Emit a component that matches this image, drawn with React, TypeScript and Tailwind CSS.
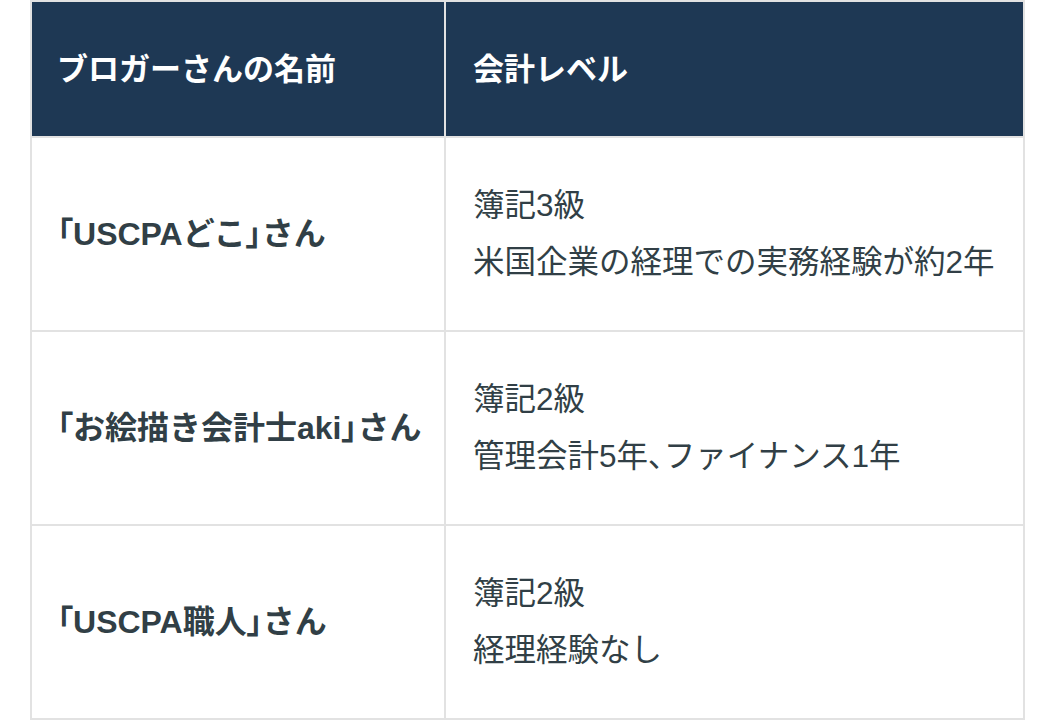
import React from "react";

const B = ({ c }: { c: string }) => <span className="[font-feature-settings:'palt']">{c}</span>;

const rows = [
  { name: ["USCPAどこ"], lines: [["簿記3級"], ["米国企業の経理での実務経験が約2年"]] },
  { name: ["お絵描き会計士aki"], lines: [["簿記2級"], ["管理会計5年", "、", "ファイナンス1年"]] },
  { name: ["USCPA職人"], lines: [["簿記2級"], ["経理経験なし"]] },
];

export default function App() {
  return (
    <div className="w-[1055px] h-[721px] bg-white overflow-hidden pl-[30px]" style={{ fontFamily: '"Liberation Sans", "Noto Sans CJK JP", sans-serif' }}>
      <div className="w-[995px] grid grid-cols-[412px_577px] gap-[2px] p-[2px] bg-[#e2e2e2] leading-[57px]">
        <div className="bg-[#1e3854] text-white font-bold text-[31px] px-[25px] py-[38.5px]">ブロガーさんの名前</div>
        <div className="bg-[#1e3854] text-white font-bold text-[31px] px-[27px] py-[38.5px]">会計レベル</div>
        {rows.map((r, i) => (
          <React.Fragment key={i}>
            <div className="bg-white text-[#313f46] font-bold text-[32px] px-[25px] py-[39px] flex items-center whitespace-nowrap">
              <span>
                <B c="「" />
                {r.name[0]}
                <B c="」" />
                さん
              </span>
            </div>
            <div className="bg-white text-[#313f46] text-[31.5px] px-[27px] py-[39px] whitespace-nowrap">
              {r.lines.map((l, j) => (
                <div key={j}>
                  {l.length === 3 ? (
                    <>
                      {l[0]}
                      <B c={l[1]} />
                      {l[2]}
                    </>
                  ) : (
                    l[0]
                  )}
                </div>
              ))}
            </div>
          </React.Fragment>
        ))}
      </div>
    </div>
  );
}
